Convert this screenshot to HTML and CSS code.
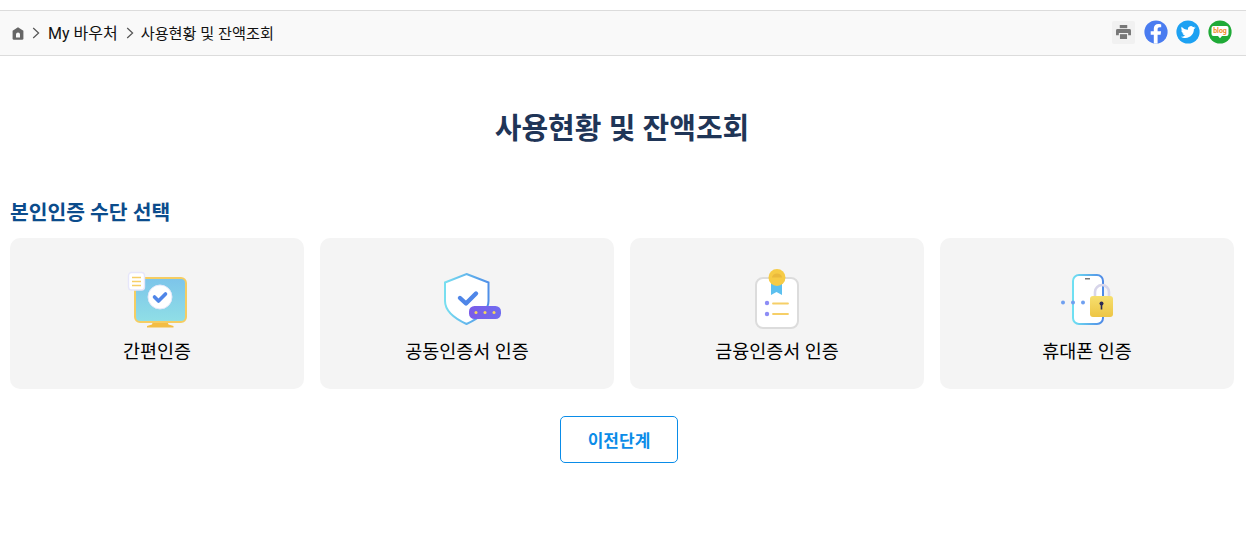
FILE: index.html
```html
<!DOCTYPE html>
<html lang="ko">
<head>
    <meta charset="UTF-8">
    <meta name="viewport" content="width=device-width, initial-scale=1.0">
    <title>사용현황 및 잔액조회</title>
    <link rel="stylesheet" href="styles.css">
</head>
<body>
    <!-- Breadcrumb bar -->
    <div class="location-bar">
        <div class="breadcrumb">
            <svg class="home-icon" width="12" height="13" viewBox="0 0 12 13">
                <path d="M6 .3 11.400 3.800V11.500a1.300 1.300 0 0 1-1.300 1.300H1.900A1.300 1.300 0 0 1 .6 11.500V3.800Z" fill="#666"/>
                <path d="M6 5.400a2 2 0 0 1 2 2v3.100H4V7.400a2 2 0 0 1 2-2Z" fill="#f9f9f9"/>
            </svg>
            <svg class="crumb-arrow" width="8" height="12" viewBox="0 0 8 12"><path d="M1.200 1 6.600 6 1.200 11" fill="none" stroke="#555" stroke-width="1.200"/></svg>
            <span class="crumb crumb-first">My 바우처</span>
            <svg class="crumb-arrow" width="8" height="12" viewBox="0 0 8 12"><path d="M1.200 1 6.600 6 1.200 11" fill="none" stroke="#555" stroke-width="1.200"/></svg>
            <span class="crumb">사용현황 및 잔액조회</span>
        </div>
        <div class="share-icons">
            <span class="print-btn">
                <svg width="15" height="14" viewBox="0 0 16 15">
                    <path d="M4 0h8v3.400H4Z" fill="#777"/>
                    <path d="M1.600 4.200h12.800A1.600 1.600 0 0 1 16 5.800V11h-3V8.600H3V11H0V5.800a1.600 1.600 0 0 1 1.600-1.600Z" fill="#777"/>
                    <path d="M4.200 9.800h7.600V15H4.200Z" fill="#777"/>
                </svg>
            </span>
            <svg class="share-icon" width="24" height="24" viewBox="0 0 24 24">
                <circle cx="12" cy="12" r="11.600" fill="#4a7cf0"/>
                <path d="M13.600 23.500v-8.700h3l.5-3.500h-3.500V9.200c0-1 .5-1.900 2-1.900h1.600V4.400s-1.400-.3-2.800-.3c-2.900 0-4.600 1.700-4.600 4.700v2.500H6.700v3.500h3.100v8.600Z" fill="#fff"/>
            </svg>
            <svg class="share-icon" width="24" height="24" viewBox="0 0 24 24">
                <circle cx="12" cy="12" r="11.600" fill="#1da1f2"/>
                <path d="M19.300 7.600c-.5.2-1.100.4-1.700.5.6-.4 1.100-1 1.300-1.700-.6.3-1.200.6-1.900.7a3 3 0 0 0-5.100 2.700C9.400 9.700 7.200 8.500 5.700 6.700c-.8 1.400-.4 3.100.9 4-.5 0-.9-.1-1.300-.4 0 1.500 1 2.700 2.400 3-.4.1-.9.1-1.300 0 .4 1.200 1.500 2.100 2.800 2.100-1.300 1-2.900 1.400-4.400 1.300 1.300.8 2.900 1.300 4.600 1.300 5.500 0 8.700-4.700 8.500-8.900.7-.4 1.200-1 1.700-1.700Z" fill="#fff"/>
            </svg>
            <svg class="share-icon" width="24" height="24" viewBox="0 0 24 24">
                <circle cx="12" cy="12" r="11.600" fill="#1faa37"/>
                <path d="M5.500 6h13a2 2 0 0 1 2 2v6a2 2 0 0 1-2 2h-4.500L12 18.200 10 16H5.500a2 2 0 0 1-2-2V8a2 2 0 0 1 2-2Z" fill="#fff"/>
                <text x="12" y="13.400" class="blog-text">blog</text>
            </svg>
        </div>
    </div>

    <div class="content">
        <h2 class="page-title">사용현황 및 잔액조회</h2>
        <h3 class="section-title">본인인증 수단 선택</h3>

        <div class="auth-list">
            <a class="auth-card" href="#">
                <svg class="auth-icon" width="64" height="56" viewBox="0 0 64 56">
                    <defs>
                        <linearGradient id="screenFill" x1="0" y1="0" x2="0" y2="1"><stop offset="0" stop-color="#7cc4ea"/><stop offset="1" stop-color="#90dfe6"/></linearGradient>
                    </defs>
                    <path d="M28 49h14l1.500 3.500 5 1.500v1.500H22V54l5-1.500Z" fill="#f3bd45"/>
                    <rect x="10" y="6" width="51" height="44" rx="5" fill="url(#screenFill)" stroke="#f5cd62" stroke-width="2"/>
                    <circle cx="35" cy="25" r="12" fill="#fff" stroke="#e4e8fb" stroke-width="1"/>
                    <path d="M29.500 25l4 4 7-7" fill="none" stroke="#4f86e8" stroke-width="3.600" stroke-linecap="round" stroke-linejoin="round"/>
                    <rect x="3.500" y=".5" width="16" height="17.500" rx="3" fill="#fff" stroke="#e6e6fa" stroke-width="1.400"/>
                    <path d="M7 5.500h9M7 9.500h9M7 13.500h9" stroke="#f6cf67" stroke-width="1.500"/>
                </svg>
                <span class="auth-label">간편인증</span>
            </a>
            <a class="auth-card" href="#">
                <svg class="auth-icon" width="64" height="56" viewBox="0 0 64 56">
                    <defs>
                        <linearGradient id="shieldLine" x1="0" y1="0" x2="1" y2="0"><stop offset="0" stop-color="#78dff0"/><stop offset="1" stop-color="#4f8fe8"/></linearGradient>
                        <linearGradient id="pillFill" x1="0" y1="0" x2="1" y2="0"><stop offset="0" stop-color="#7b5ce8"/><stop offset="1" stop-color="#6f6cf0"/></linearGradient>
                    </defs>
                    <path d="M31.500 2 53.500 10.500V29c0 9-9 17-22 23C18.500 46 10 38 10 29V10.500Z" fill="#fff" stroke="url(#shieldLine)" stroke-width="2"/>
                    <path d="M25 26l6 5.500 10-10" fill="none" stroke="#4f86e8" stroke-width="4.400" stroke-linecap="round" stroke-linejoin="round"/>
                    <rect x="34" y="34" width="32" height="13" rx="5.500" fill="url(#pillFill)"/>
                    <circle cx="41" cy="40.500" r="1.500" fill="#f6d65f"/><circle cx="50" cy="40.500" r="1.500" fill="#f6d65f"/><circle cx="59" cy="40.500" r="1.500" fill="#f6d65f"/>
                </svg>
                <span class="auth-label">공동인증서 인증</span>
            </a>
            <a class="auth-card" href="#">
                <svg class="auth-icon" width="64" height="56" viewBox="0 0 64 56">
                    <rect x="11" y="6" width="42" height="50" rx="7" fill="#fff" stroke="#dcdcdc" stroke-width="2"/>
                    <path d="M26 8h11v15l-5.500-3-5.500 3Z" fill="#5cc0ef"/>
                    <circle cx="32" cy="5.500" r="8.500" fill="#f6cb45"/>
                    <path d="M27 5.500a5 4 0 0 1 10 0Z" fill="#eab93c"/>
                    <circle cx="22" cy="31" r="2.200" fill="#8d8df5"/><circle cx="22" cy="42" r="2.200" fill="#8d8df5"/>
                    <path d="M28 31.500h15M28 42h15" stroke="#f6cf67" stroke-width="1.800" stroke-linecap="round"/>
                </svg>
                <span class="auth-label">금융인증서 인증</span>
            </a>
            <a class="auth-card" href="#">
                <svg class="auth-icon" width="64" height="56" viewBox="0 0 64 56">
                    <defs>
                        <linearGradient id="phoneLine" x1="0" y1="0" x2="1" y2="0"><stop offset="0" stop-color="#6fe0f2"/><stop offset="1" stop-color="#4f8ae6"/></linearGradient>
                        <linearGradient id="lockFill" x1="0" y1="0" x2="0" y2="1"><stop offset="0" stop-color="#f6df6e"/><stop offset="1" stop-color="#edc545"/></linearGradient>
                    </defs>
                    <rect x="18" y="3" width="30" height="49" rx="6" fill="#fff" stroke="url(#phoneLine)" stroke-width="2"/>
                    <rect x="30" y="6" width="5" height="1.500" fill="#777"/>
                    <circle cx="8" cy="30.500" r="2" fill="#6fa0f0"/><circle cx="18" cy="30.500" r="2" fill="#6fa0f0"/><circle cx="28" cy="30.500" r="2" fill="#6fa0f0"/>
                    <path d="M40 26v-6a7 7 0 0 1 14 0v6" fill="none" stroke="#d7d5ea" stroke-width="2.600"/>
                    <rect x="35" y="24" width="23" height="21" rx="3" fill="url(#lockFill)"/>
                    <circle cx="46.500" cy="31.500" r="2" fill="#2b2a55"/>
                    <path d="M45.700 32h1.600v5.500h-1.600Z" fill="#2b2a55"/>
                </svg>
                <span class="auth-label">휴대폰 인증</span>
            </a>
        </div>

        <div class="btn-area">
            <a class="btn-prev" href="#">이전단계</a>
        </div>
    </div>
</body>
</html>
```

FILE: styles.css
```css
body {
    margin: 0;
    padding-top: 10px;
    background: #fff;
    color: #111;
    font-family: Roboto, "Noto Sans CJK KR", sans-serif;
}
a {
    text-decoration: none;
    color: inherit;
}
.location-bar {
    display: flex;
    justify-content: space-between;
    align-items: center;
    box-sizing: border-box;
    height: 46px;
    padding: 0 14px 0 12px;
    background: #f9f9f9;
    border-top: 1px solid #dcdcdc;
    border-bottom: 1px solid #dcdcdc;
}
.breadcrumb {
    display: flex;
    align-items: center;
    color: #111;
}
.crumb {
    font-size: 15.200px;
    margin-bottom: 2px;
}
.crumb-first {
    margin-left: 1px;
    font-size: 16px;
}
.crumb-arrow {
    margin: 0 7px 0 8px;
}
.share-icons {
    display: flex;
    align-items: center;
    gap: 8px;
    margin-bottom: 2px;
}
.print-btn {
    display: flex;
    justify-content: center;
    align-items: center;
    width: 23px;
    height: 23px;
    margin-right: 1px;
    background: #f1f1f1;
    border-radius: 2px;
}
.blog-text {
    font-family: Roboto, sans-serif;
    font-size: 7px;
    font-weight: 700;
    fill: #f08a24;
    text-anchor: middle;
}
.content {
    padding: 0 12px 0 10px;
}
.page-title {
    margin: 0;
    padding-top: 52px;
    font-size: 29px;
    line-height: 42px;
    font-weight: 700;
    text-align: center;
    color: #1f3557;
}
.section-title {
    margin: 48px 0 10px;
    font-size: 20.400px;
    line-height: 30px;
    font-weight: 700;
    color: #0b4c8c;
}
.auth-list {
    display: grid;
    grid-template-columns: repeat(4, 1fr);
    gap: 16px;
}
.auth-card {
    display: flex;
    flex-direction: column;
    align-items: center;
    height: 151px;
    box-sizing: border-box;
    padding-top: 34px;
    background: #f4f4f4;
    border-radius: 10px;
}
.auth-icon {
    overflow: visible;
}
.auth-label {
    margin-top: 11px;
    font-size: 18.500px;
    line-height: 26px;
    color: #000;
}
.btn-area {
    display: flex;
    justify-content: center;
    margin-top: 27px;
    padding-right: 6px;
}
.btn-prev {
    display: flex;
    justify-content: center;
    align-items: center;
    box-sizing: border-box;
    width: 118px;
    height: 47px;
    background: #fff;
    border: 1px solid #0a8ce8;
    border-radius: 5px;
    color: #0a8ce8;
    font-size: 17px;
    font-weight: 700;
}
```
